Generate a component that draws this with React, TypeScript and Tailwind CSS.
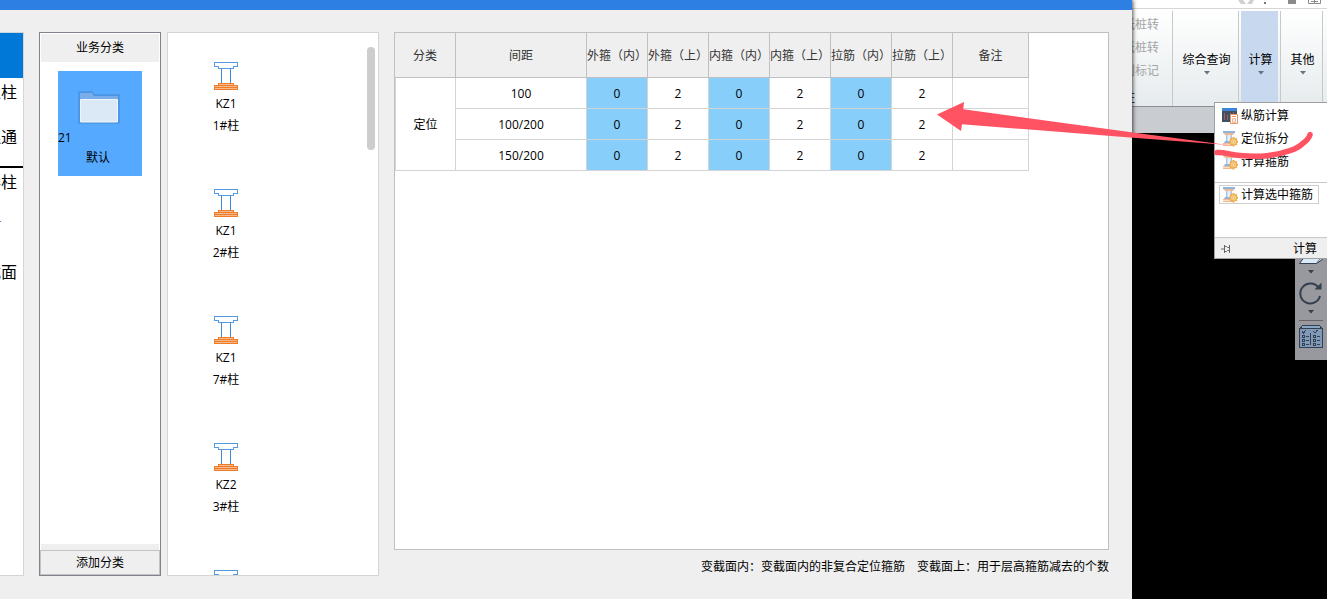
import React, { useState } from "react";

type Column = {
  name: string;
  label: string;
};

type SpacingRow = {
  spacing: string;
  values: number[];
};

const columns: Column[] = [
  { name: "KZ1", label: "1#柱" },
  { name: "KZ1", label: "2#柱" },
  { name: "KZ1", label: "7#柱" },
  { name: "KZ2", label: "3#柱" },
  { name: "", label: "" },
];

const hoopHeaders = ["外箍（内）", "外箍（上）", "内箍（内）", "内箍（上）", "拉筋（内）", "拉筋（上）"];

const rows: SpacingRow[] = [
  { spacing: "100", values: [0, 2, 0, 2, 0, 2] },
  { spacing: "100/200", values: [0, 2, 0, 2, 0, 2] },
  { spacing: "150/200", values: [0, 2, 0, 2, 0, 2] },
];

function ColumnIcon() {
  return (
    <svg width="24" height="28" viewBox="0 0 24 28" fill="none" shapeRendering="crispEdges" className="shrink-0">
      <path d="M.5.5h23v4h-4v2h-15v-2h-4z" stroke="#5599e2" />
      <path d="M7.500 7v14M16.500 7v14" stroke="#3f8ad8" />
      <path d="M4.500 21.500h15v2h-15z" fill="#f9b98a" stroke="#ee7d2b" />
      <path d="M.5 23.500h23v4H.5z" fill="#f9b98a" stroke="#ee7d2b" />
      <path d="M1 25.500h22" stroke="#ee7d2b" />
    </svg>
  );
}

function FolderIcon() {
  return (
    <svg width="42" height="34" viewBox="0 0 42 34">
      <path d="M1 1h13l2 3h25v28H1z" fill="#4f94de" stroke="#4b94e2" strokeWidth="1.500" strokeLinejoin="round" />
      <path d="M2 2h12l2 3h24v3H2z" fill="#79aeea" />
      <path d="M2.500 8.500h37v22.500h-37z" fill="#dbe8f6" stroke="#f0f5fb" />
    </svg>
  );
}

function SplitIcon() {
  return (
    <svg width="16" height="16" viewBox="0 0 16 16" className="shrink-0">
      <path d="M1 0h12v2l-2 1H3L1 2z" fill="#8db5e3" />
      <path d="M2 2h10l-1 2H3z" fill="#f5b889" />
      <path d="M4 4h6v7H4z" fill="#a9c4e6" />
      <path d="M5.500 4h3v7h-3z" fill="#eef2f8" />
      <path d="M3 10h7l1 2H2z" fill="#8db5e3" />
      <path d="M1 12h11v3H1z" fill="#f5b889" />
      <path d="M1 13.500h11" stroke="#fbe0cb" />
      <g stroke="#eba94f" strokeWidth="2">
        <path d="M11.500 6v9.500M7 10.700h9M8.300 7.500l6.400 6.400M14.700 7.500l-6.400 6.400" />
      </g>
      <circle cx="11.500" cy="10.700" r="3.200" fill="#fbd285" stroke="#eba94f" />
      <circle cx="11.500" cy="10.700" r="1.200" fill="#fff3da" stroke="#e8a040" strokeWidth=".7" />
    </svg>
  );
}

function RebarIcon() {
  return (
    <svg width="16" height="16" viewBox="0 0 16 16" className="shrink-0">
      <path d="M0 0h15v14H0z" fill="#444d5e" />
      <path d="M0 0h15v3H0z" fill="#3c85d9" />
      <path d="M2.500 5v7M5.500 7v5M8.500 5v3M11.500 4v2" stroke="#9a6468" />
      <path d="M8.500 6.500h7v9h-7z" fill="#fff" stroke="#ef9565" />
      <path d="M10 8.500h4" stroke="#ef9565" />
      <path d="M10.500 10.500h3v4h-3z" fill="#f3e5de" stroke="#e4bda8" />
    </svg>
  );
}

function Caret() {
  return (
    <svg width="6" height="4" viewBox="0 0 6 4">
      <path d="M0 0h6L3 3.500z" fill="currentColor" />
    </svg>
  );
}

function Sidebar() {
  return (
    <nav className="flex w-6 shrink-0 flex-col overflow-hidden border-y border-r border-[#d5d5d5] bg-white text-base leading-7">
      <div className="h-[45px] shrink-0 bg-[#0078d7]" />
      <a href="#single" className="flex h-[45px] shrink-0 justify-end overflow-hidden whitespace-nowrap pr-1.5">立柱</a>
      <a href="#link" className="flex h-[45px] shrink-0 justify-end overflow-hidden whitespace-nowrap border-b-2 border-black pr-1.5">连通</a>
      <a href="#column" className="flex h-[45px] shrink-0 justify-end overflow-hidden whitespace-nowrap pr-1.5">形柱</a>
      <div className="h-[45px] shrink-0 pt-2">
        <div className="h-px w-px bg-[#3f8ad8]" />
      </div>
      <a href="#section" className="flex h-[45px] shrink-0 justify-end overflow-hidden whitespace-nowrap pr-1.5">截面</a>
    </nav>
  );
}

function CategoryPanel() {
  return (
    <section className="ml-[15px] flex w-[122px] shrink-0 flex-col border border-[#7f838e] bg-white">
      <h2 className="mx-px mt-px flex h-7 shrink-0 items-center justify-center bg-[#efefef]">业务分类</h2>
      <div className="flex-1 px-[18px] pt-[9px]">
        <button className="flex h-[105px] w-[84px] flex-col items-center bg-[#55aaff] pt-5">
          <span className="mr-0.5">
            <FolderIcon />
          </span>
          <span className="mt-[3px] self-start leading-5">21</span>
          <span className="mr-1 leading-5">默认</span>
        </button>
      </div>
      <div className="mx-px h-1.5 shrink-0 bg-[#efefef]" />
      <button className="flex h-[25px] shrink-0 items-center justify-center border border-[#c3c3c3] bg-[#efefef]">添加分类</button>
    </section>
  );
}

function ColumnList() {
  return (
    <section className="ml-1.5 flex w-[212px] shrink-0 overflow-hidden border border-[#d5d5d5] bg-white">
      <ul className="w-[116px]">
        {columns.map((column, index) => (
          <li key={index} className="flex h-[127px] flex-col items-center pt-[29px]">
            <ColumnIcon />
            <span className="mt-[3px] leading-[22px]">{column.name}</span>
            <span className="leading-[22px]">{column.label}</span>
          </li>
        ))}
      </ul>
      <div className="mt-3.5 mr-[3px] ml-auto h-[103px] w-2 rounded-full bg-[#cdcdcd]" />
    </section>
  );
}

function SpacingTable() {
  return (
    <table className="w-[634px] table-fixed border-separate border-spacing-0 text-center leading-5">
      <colgroup>
        <col className="w-[61px]" />
        <col className="w-[131px]" />
        {hoopHeaders.map((header) => (
          <col key={header} className="w-[61px]" />
        ))}
        <col className="w-[76px]" />
      </colgroup>
      <thead>
        <tr className="h-[45px] bg-[#efefef] text-[#333]">
          <th className="border-r border-b border-[#c0c0c0] p-0 pt-0.5 font-normal">分类</th>
          <th className="border-r border-b border-[#c0c0c0] p-0 pt-0.5 font-normal">间距</th>
          {hoopHeaders.map((header) => (
            <th key={header} className="whitespace-nowrap border-r border-b border-[#c0c0c0] p-0 pt-0.5 font-normal">
              {header}
            </th>
          ))}
          <th className="border-r border-b border-[#c0c0c0] p-0 pt-0.5 font-normal">备注</th>
        </tr>
      </thead>
      <tbody>
        {rows.map((row, index) => (
          <tr key={row.spacing} className="h-[31px]">
            {index === 0 && (
              <td rowSpan={rows.length} className="border-x border-b border-[#d4d4d4] p-0 pt-0.5">
                定位
              </td>
            )}
            <td className="border-r border-b border-[#d4d4d4] p-0 pt-0.5">{row.spacing}</td>
            {row.values.map((value, i) => (
              <td key={i} className={`border-r border-b border-[#d4d4d4] p-0 pt-0.5 ${i % 2 === 0 ? "bg-[#87cefa]" : ""}`}>
                {value}
              </td>
            ))}
            <td className="border-r border-b border-[#d4d4d4] p-0" />
          </tr>
        ))}
      </tbody>
    </table>
  );
}

function Ribbon() {
  return (
    <header className="shrink-0">
      <div className="flex h-[9px] justify-end border-b border-[#d6d6d6] bg-white">
        <svg width="95" height="5" viewBox="0 0 95 5">
          <path d="M6 0h5l3 4H9zM15 4l3-4h4l-2 4z" fill="#d0d0d0" />
          <path d="M32 2h2v2h-2z" fill="#777" />
          <path d="M56 0h8v4h-8z" fill="#8a8a8a" />
          <path d="M76.500 0v3.500h12V0M82.500 0v3.500M79 1.500h7" fill="none" stroke="#8a8a8a" />
        </svg>
      </div>
      <div className="flex h-[98px] items-stretch border-b border-[#8b8d90] bg-linear-to-b from-white to-[#e6ebed] pt-0.5">
        <div className="flex w-[41px] shrink-0 flex-col items-end overflow-hidden border-r border-[#c8c8c8] pt-0.5 pr-[13px] text-[#a3a3a3]">
          <button disabled className="h-[23px] shrink-0 whitespace-nowrap">纸桩转</button>
          <button disabled className="h-[23px] shrink-0 whitespace-nowrap">纸桩转</button>
          <button disabled className="h-[23px] shrink-0 whitespace-nowrap">别标记</button>
          <span className="mt-1 mr-6 leading-6 text-black">柱</span>
        </div>
        <button className="flex w-[66px] shrink-0 flex-col items-center border-r border-[#c8c8c8] pt-[39px] pl-0.5">
          <span className="leading-5">综合查询</span>
          <span className="mt-px text-gray-500">
            <Caret />
          </span>
        </button>
        <button className="flex w-[42px] shrink-0 border-r border-[#c8c8c8] pr-0.5 pl-0.5">
          <span className="flex h-full flex-1 flex-col items-center bg-[#c8d8ef] pt-[39px] pl-0.5">
            <span className="leading-5">计算</span>
            <span className="mt-px text-gray-500">
              <Caret />
            </span>
          </span>
        </button>
        <button className="flex w-[42px] shrink-0 flex-col items-center border-r border-[#c8c8c8] pt-[39px] pl-0.5">
          <span className="leading-5">其他</span>
          <span className="mt-px text-gray-500">
            <Caret />
          </span>
        </button>
      </div>
    </header>
  );
}

function CalcMenu() {
  return (
    <div className="absolute top-[102px] right-0 flex w-[113px] flex-col border-y border-l border-[#a0a0a0] bg-white">
      <div className="flex flex-col border-b border-[#c8c8c8] pt-px pb-[9px]">
        <button className="flex h-[23px] items-center gap-[3px] pl-[7px]">
          <RebarIcon />
          纵筋计算
        </button>
        <button className="flex h-[23px] items-center gap-[3px] pl-[7px]">
          <SplitIcon />
          定位拆分
        </button>
        <button className="flex h-[23px] items-center gap-[3px] pl-[7px]">
          <SplitIcon />
          计算箍筋
        </button>
      </div>
      <button className="mt-0.5 ml-1 flex h-[19px] w-[100px] items-center gap-[3px] whitespace-nowrap border border-[#cfcfcf] pl-0.5">
        <SplitIcon />
        计算选中箍筋
      </button>
      <div className="mt-[33px] flex h-[21px] items-center justify-between border-t border-[#c8c8c8] bg-[#efefef] pt-0.5 pr-2.5 pl-1.5">
        <svg width="10" height="10" viewBox="0 0 10 10" fill="none" stroke="#666">
          <path d="M0 5h3M3.500 1v8M3.500 2.500h2l1 1h2v-2M3.500 7.500h2l1-1h2v2M8.500 1v8" />
        </svg>
        <span>计算</span>
      </div>
    </div>
  );
}

function ViewToolbar() {
  return (
    <div className="flex h-[227px] w-8 flex-col items-center bg-[#97999e] pt-[122px] text-[#35404f]">
      <svg width="26" height="10" viewBox="0 0 26 10" className="shrink-0">
        <path d="M1.500 8.500l6-8h17l-6 8z" fill="#dbeaf9" stroke="#35404f" />
        <path d="M18.500 8.500l6-4v-4" fill="#b9cee6" stroke="#35404f" />
      </svg>
      <span className="mt-[5px]">
        <Caret />
      </span>
      <svg width="24" height="24" viewBox="0 0 24 24" fill="none" stroke="currentColor" strokeWidth="2" className="mt-[7px] shrink-0">
        <path d="M20 7.500a10 10 0 1 0 1 7.500" />
        <path d="M22.500 1.500v7h-7z" fill="currentColor" strokeWidth="0" />
      </svg>
      <span className="mt-[5px]">
        <Caret />
      </span>
      <div className="mt-1.5 h-px w-6 shrink-0 bg-[#6b6460]" />
      <svg width="24" height="24" viewBox="0 0 24 24" fill="none" stroke="currentColor" shapeRendering="crispEdges" className="mt-1 shrink-0">
        <path d="M.5 4.500l3-4h17l3 4" fill="#8ca5c4" />
        <path d="M.5 3.500h23v19H.5z" fill="#8199b8" />
        <path d="M11.500 8v12M3 6.500l1.500 1.500L7 5M14.500 6.500L16 8l2.500-3M3.500 10.500h2v2h-2zM3.500 14.500h2v2h-2zM3.500 18.500h2v2h-2zM14.500 10.500h2v2h-2zM14.500 14.500h2v2h-2zM14.500 18.500h2v2h-2zM7 11.500h3M7 15.500h3M7 19.500h3M18 11.500h3M18 15.500h3M18 19.500h3" />
      </svg>
    </div>
  );
}

// Arrow from the menu item to the table, plus the underline stroke
function Annotation() {
  return (
    <svg width="400" height="180" viewBox="927 0 400 180" className="pointer-events-none absolute top-0 right-0 z-20">
      <path d="M937 114.500L964 102l-.7 7.300L1133 132.500 1228 145l-95-7.300-106.500-8.400-64.500-5-1 6.700z" fill="#ff5263" />
      <path
        d="M1217 152.500c8-.5 14 2.500 23 3 10 1 18 1 27 .2 9-1 16-2.500 23-5 6-2 10-4.500 13-7.500 4-3 6-5 7-8.500"
        fill="none"
        stroke="#ff5263"
        strokeWidth="5.500"
        strokeLinecap="round"
        strokeLinejoin="round"
      />
    </svg>
  );
}

export default function App() {
  const [menuOpen] = useState(true);

  return (
    <div className="relative flex h-screen overflow-hidden bg-black font-['Open_Sans','Noto_Sans_CJK_SC',sans-serif] text-xs text-black">
      {/* Dialog */}
      <main className="relative z-10 flex min-w-0 flex-1 flex-col bg-[#efefef] shadow-[1px_0_4px_rgba(0,0,0,0.7)]">
        <div className="h-2.5 shrink-0 bg-[#2d7fe3]" />
        <div className="flex min-h-0 flex-1 pt-[22px] pr-[23px] pb-[23px]">
          <Sidebar />
          <CategoryPanel />
          <ColumnList />
          <section className="ml-[15px] flex min-w-0 flex-1 flex-col">
            <div className="min-h-0 flex-1 border border-[#c0c0c0] bg-white">
              <SpacingTable />
            </div>
            <p className="flex h-[26px] shrink-0 items-end justify-end gap-3 whitespace-nowrap leading-[18px]">
              <span>变截面内：变截面内的非复合定位箍筋</span>
              <span>变截面上：用于层高箍筋减去的个数</span>
            </p>
          </section>
        </div>
      </main>

      {/* Host application */}
      <aside className="relative flex w-[195px] shrink-0 flex-col bg-white">
        <Ribbon />
        <div className="h-[26px] shrink-0 bg-[#c9ccd1]" />
        <div className="flex flex-1 items-start justify-end bg-black">
          <ViewToolbar />
        </div>
        {menuOpen && <CalcMenu />}
      </aside>

      <Annotation />
    </div>
  );
}
